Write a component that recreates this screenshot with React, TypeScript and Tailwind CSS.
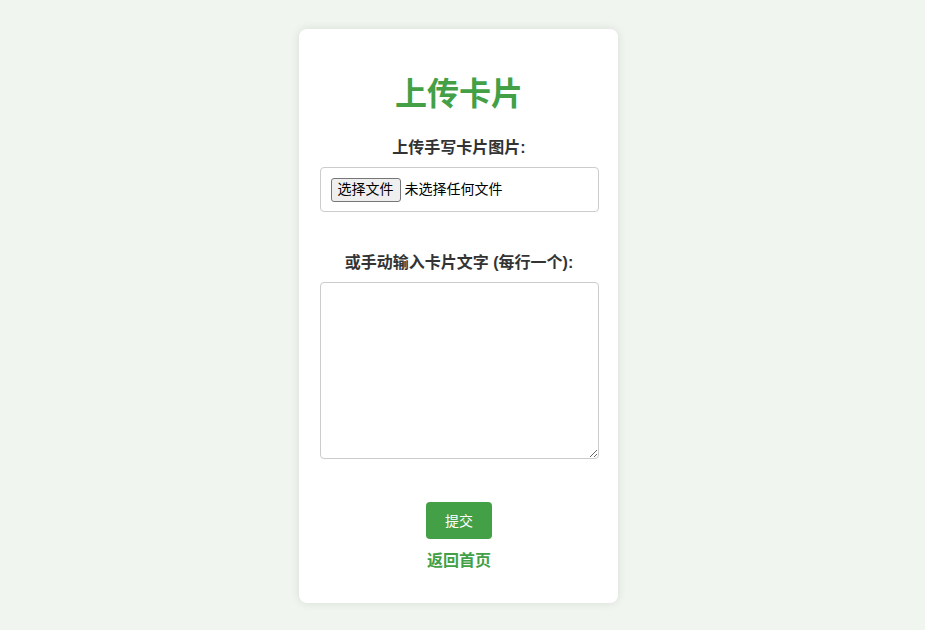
import React, { useState } from 'react';

const font = { fontFamily: '"Liberation Sans", "Noto Sans CJK SC", sans-serif' };

export default function App() {
  const [text, setText] = useState('');

  return (
    <div className="min-h-screen bg-[#f0f5ef] flex justify-center pt-[29px] pr-[9px]" style={font}>
      <div className="w-[319px] h-[574px] bg-white rounded-lg shadow-[0_0_10px_rgba(0,0,0,0.1)] pl-[21px] pr-[19px] pt-5 flex flex-col items-center">
        <h1 className="mt-[26px] text-[32px] leading-[38px] font-bold text-[#43a047]">上传卡片</h1>

        <label className="mt-[23px] text-base leading-6 font-bold text-[#333]">上传手写卡片图片:</label>
        <div className="mt-[7px] w-full h-[45px] border border-[#ccc] rounded flex items-center px-[10px] gap-1">
          <span className="h-6 px-[6px] flex items-center text-[14px] text-black bg-[#efefef] border border-[#767676] rounded-[3px]">选择文件</span>
          <span className="text-[14px] text-black">未选择任何文件</span>
        </div>

        <label className="mt-[39px] text-base leading-6 font-bold text-[#333]">或手动输入卡片文字 (每行一个):</label>
        <textarea
          value={text}
          onChange={e => setText(e.target.value)}
          className="mt-[7px] w-full h-[177px] border border-[#ccc] rounded p-2 text-sm outline-none"
        />

        <button className="mt-[43px] w-[66px] h-[37px] bg-[#43a047] text-white text-sm rounded">提交</button>
        <a className="mt-[10px] text-base leading-6 font-bold text-[#43a047]">返回首页</a>
      </div>
    </div>
  );
}
